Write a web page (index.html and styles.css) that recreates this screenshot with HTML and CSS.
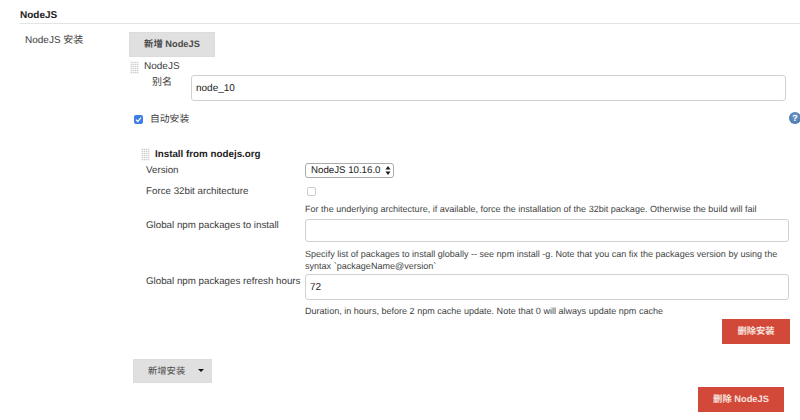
FILE: index.html
```html
<!DOCTYPE html>
<html lang="zh">
<head>
<meta charset="utf-8">
<title>NodeJS</title>
<link rel="stylesheet" href="styles.css">
</head>
<body>
<header class="section-head"><h2 class="section-title">NodeJS</h2></header>
<main class="section-body">
  <div class="section-label">NodeJS 安装</div>
  <div class="section-content">
    <button class="btn btn-add-top" type="button">新增 NodeJS</button>
    <div class="chunk-head"><span class="handle"></span><span>NodeJS</span></div>
    <div class="alias-row">
      <label class="alias-label">别名</label>
      <input class="text-input alias-input" type="text" value="node_10">
    </div>
    <div class="auto-row">
      <span class="check check-on"><svg viewBox="0 0 9 9" width="9" height="9"><path d="M2 4.7 3.8 6.5 7 2.6" fill="none" stroke="#fff" stroke-width="1.2"/></svg></span>
      <span class="auto-label">自动安装</span>
      <span class="help">?</span>
    </div>
    <div class="installer">
      <div class="installer-head"><span class="handle"></span><span class="installer-title">Install from nodejs.org</span></div>
      <div class="form">
        <div class="row row-version">
          <div class="row-label">Version</div>
          <div class="row-field"><div class="select"><span>NodeJS 10.16.0</span><svg class="updown" viewBox="0 0 6 9" width="6" height="9"><path d="M3 0 5.6 3.4H.4zM3 9 .4 5.6H5.6z" fill="#222"/></svg></div></div>
        </div>
        <div class="row row-force">
          <div class="row-label">Force 32bit architecture</div>
          <div class="row-field"><span class="check check-off"></span></div>
        </div>
        <div class="hint hint-force">For the underlying architecture, if available, force the installation of the 32bit package. Otherwise the build will fail</div>
        <div class="row row-npm">
          <div class="row-label">Global npm packages to install</div>
          <div class="row-field"><input class="text-input wide-input" type="text"></div>
        </div>
        <div class="hint hint-npm">Specify list of packages to install globally -- see npm install -g. Note that you can fix the packages version by using the syntax `packageName@version`</div>
        <div class="row row-refresh">
          <div class="row-label">Global npm packages refresh hours</div>
          <div class="row-field"><input class="text-input wide-input refresh-input" type="text" value="72"></div>
        </div>
        <div class="hint hint-refresh">Duration, in hours, before 2 npm cache update. Note that 0 will always update npm cache</div>
      </div>
      <div class="delete-install-row"><button class="btn btn-danger btn-del-install" type="button">删除安装</button></div>
    </div>
    <button class="btn btn-add-install" type="button"><span>新增安装</span><span class="caret"></span></button>
    <div class="delete-node-row"><button class="btn btn-danger btn-del-node" type="button">删除 NodeJS</button></div>
  </div>
</main>
</body>
</html>
```
FILE: styles.css
```css
* { box-sizing: border-box; }
html, body { margin: 0; height: 420px; overflow: hidden; background: #fff; }
body { font-family: "Liberation Sans", "Noto Sans CJK SC", sans-serif; font-size: 10px; line-height: 14px; color: #3c3c3c; text-rendering: geometricPrecision; }
.section-head { margin-left: 20px; height: 24px; padding-top: 9px; border-bottom: 1px solid #e4e4e4; }
.section-title { margin: 0; font-size: 10px; line-height: 14px; font-weight: bold; color: #222; }
.section-body { display: flex; padding-left: 25px; }
.section-label { width: 104px; padding-top: 10px; }
.section-content { flex: 1; min-width: 0; padding-top: 8px; }
.btn { display: flex; align-items: center; justify-content: center; border: 1px solid #dcdcdc; border-radius: 0; background: #e0e0e0; color: #4a4a4a; font: bold 9.3px/14px "Liberation Sans", "Noto Sans CJK SC", sans-serif; padding: 0 0 1px; text-rendering: geometricPrecision; }
.btn-add-top { width: 86px; height: 25px; }
.chunk-head { display: flex; align-items: center; gap: 5px; height: 14px; margin: 3px 0 0 1px; }
.handle { display: block; width: 9px; height: 13px; flex: none; background: repeating-linear-gradient(90deg, rgba(255,255,255,.6) 0 1px, transparent 1px 2px), repeating-linear-gradient(0deg, #f2f2f2 0 1px, #cfcfcf 1px 2px); }
.alias-row { display: flex; margin-top: 1px; }
.alias-label { width: 62px; padding: 1px 0 0 23px; }
.text-input { display: block; height: 26px; border: 1px solid #d0d0d0; border-radius: 3px; background: #fff; color: #222; font: 10px "Liberation Sans", sans-serif; padding: 0 4px; outline: none; text-rendering: geometricPrecision; }
.alias-input { width: 595px; }
.auto-row { display: flex; align-items: center; height: 14px; margin-top: 11px; padding-left: 5px; position: relative; }
.check { display: block; width: 9px; height: 9px; border-radius: 2px; flex: none; }
.check-on { background: #3b7fe4; }
.check-on svg { display: block; }
.check-off { border: 1px solid #ccc; background: #fff; margin-left: 2px; }
.auto-label { margin-left: 7px; padding-top: 1px; font-size: 9.8px; }
.help { position: absolute; left: 660px; top: 0; width: 12px; height: 12px; border-radius: 50%; background: radial-gradient(circle at 50% 40%, #6f9bcb, #3f6da3); color: #fff; font: bold 9px/12px "Liberation Sans", sans-serif; text-align: center; }
.installer { margin-top: 21px; }
.installer-head { display: flex; align-items: center; gap: 5px; height: 14px; padding-left: 12px; }
.installer-title { font-weight: bold; font-size: 9.8px; color: #222; padding-top: 1px; }
.form { margin-top: 2px; padding-left: 17px; }
.row { display: flex; }
.row-label { width: 159px; flex: none; white-space: nowrap; font-size: 9.75px; }
.row-field { flex: none; width: 484px; }
.row-version { height: 14px; align-items: flex-start; }
.row-version .row-label { padding-top: 1px; }
.select { display: flex; align-items: center; justify-content: space-between; width: 89px; height: 15px; padding: 0 2px 0 5px; border: 1px solid #aaa; border-radius: 3px; background: #fff; color: #222; white-space: nowrap; font-size: 9.7px; }
.row-force { margin-top: 7px; height: 14px; align-items: center; }
.row-force .row-label { padding-top: 2px; }
.hint { font-size: 9.05px; line-height: 12px; margin-left: 159px; width: 484px; color: #444; }
.hint-force { margin-top: 5px; }
.row-npm { margin-top: 4px; align-items: flex-start; }
.wide-input { width: 484px; height: 23px; }
.hint-npm { margin-top: 6px; }
.row-refresh { margin-top: 2px; }
.row-refresh .row-label { padding-top: 1px; }
.refresh-input { height: 26px; }
.hint-refresh { margin-top: 5px; }
.delete-install-row { display: flex; justify-content: flex-end; width: 661px; margin-top: 2px; }
.btn-danger { background: #d24939; border-color: #d24939; color: #f6e3df; }
.btn-del-install { width: 68px; height: 25px; }
.btn-add-install { width: 79px; height: 24px; margin: 15px 0 0 4px; justify-content: flex-start; padding-left: 14px; font-weight: normal; }
.caret { width: 0; height: 0; margin-left: 13px; border-left: 3px solid transparent; border-right: 3px solid transparent; border-top: 3px solid #111; }
.delete-node-row { display: flex; justify-content: flex-end; width: 655px; margin-top: 4px; }
.btn-del-node { width: 86px; height: 25px; }
```
